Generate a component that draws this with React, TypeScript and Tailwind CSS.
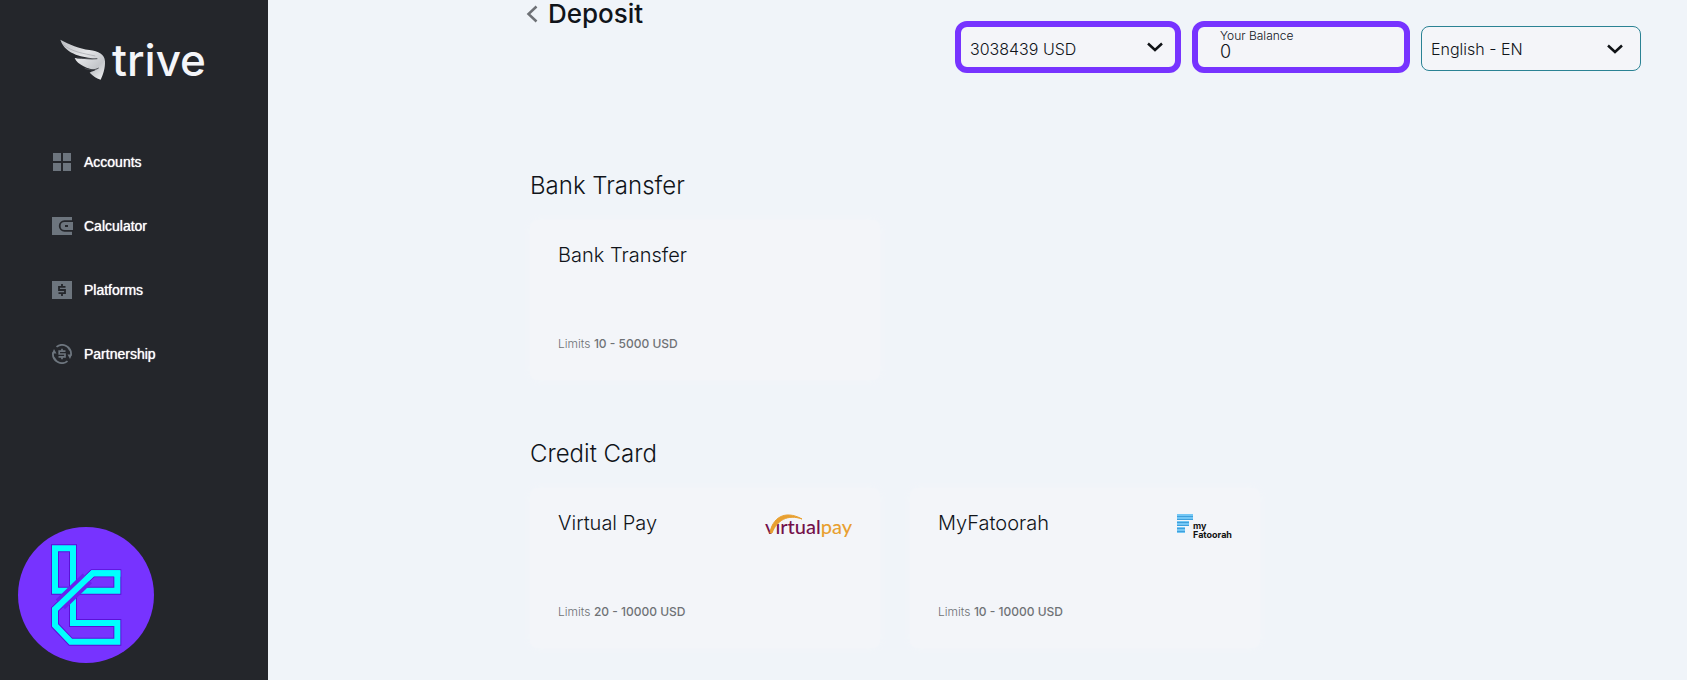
import { useState } from 'react';
import type { ReactNode } from 'react';

type Method = {
  name: string;
  limits: string;
  logo?: ReactNode;
};

function TriveLogo() {
  return (
    <a href="#home" className="flex items-center pl-[60px] text-[#f4f5f9]">
      <svg viewBox="60 55 138 126" className="h-[42px] w-[46px]" aria-hidden="true">
        <defs>
          <linearGradient id="wing" x1="0" y1="0" x2="1" y2="1">
            <stop offset="0" stopColor="#b9bbbf" />
            <stop offset="0.45" stopColor="#e4e5e8" />
            <stop offset="0.75" stopColor="#c4c6ca" />
            <stop offset="1" stopColor="#f4f5f7" />
          </linearGradient>
        </defs>
        {/* three feathers, largest at the top */}
        <path
          d="M61 57C88 72 118 84 148 88C176 92 194 100 195 122C196 142 189 163 182 177C172 174 158 166 149 156C154 152 164 150 168 147C146 147 112 132 104 112C120 112 150 116 164 114C134 108 78 106 61 57Z"
          fill="url(#wing)"
        />
        <path d="M70 72C96 94 130 98 166 106" fill="none" stroke="#a3a5aa" strokeWidth="2" />
        <path d="M110 112C130 112 150 117 172 114M134 143C150 149 164 149 176 142" fill="none" stroke="#4a4c52" strokeWidth="3" />
      </svg>
      <span className="pl-1.5 text-[44px] leading-10 font-medium">trive</span>
    </a>
  );
}

function AccountsIcon() {
  return (
    <svg viewBox="0 0 20 20" className="size-5" fill="#6d757e" aria-hidden="true">
      <path d="M1 1h8v8H1zM11 1h8v8h-8zM1 11h8v8H1zM11 11h8v8h-8z" />
    </svg>
  );
}

function CalculatorIcon() {
  return (
    <svg viewBox="0 0 21 20" className="h-5 w-[21px]" aria-hidden="true">
      <path d="M0 1h20v18H0z" fill="#6d757e" />
      <path d="M21 5H12.500a5 5 0 0 0 0 10H21z" fill="#6d757e" />
      <path d="M21 5.200H12.500a4.800 4.800 0 0 0 0 9.600H21" fill="none" stroke="#24262b" strokeWidth="1.800" />
      <rect x="13" y="9" width="3" height="2" fill="#24262b" />
    </svg>
  );
}

function PlatformsIcon() {
  return (
    <svg viewBox="0 0 20 20" className="size-5" aria-hidden="true">
      <rect y="1" width="20" height="18" fill="#6d757e" />
      <path d="M13.500 6.800H7V10H13V13.200H6.500M10 4V7M10 13V16" fill="none" stroke="#24262b" strokeWidth="1.800" />
    </svg>
  );
}

function PartnershipIcon() {
  return (
    <svg viewBox="0 0 20 20" className="size-5" fill="none" stroke="#6d757e" aria-hidden="true">
      <path d="M4.500 2.900A9 9 0 0 1 18.900 11.500M15.500 17.100A9 9 0 0 1 1.100 8.500" strokeWidth="1.800" />
      <path d="M20 10.500L15.500 10.500L18 15ZM0 9.500L4.500 9.500L2 5Z" fill="#6d757e" stroke="none" />
      <path d="M2.200 13.500A9 9 0 0 0 4.500 17" strokeWidth="1.500" />
      <path d="M17.800 6.500A9 9 0 0 0 15.500 3" strokeWidth="1.500" />
      <path d="M13.500 7.200H7.200V10H13V12.800H6.500M10 4.800V7.200M10 12.800V15.200" strokeWidth="1.700" />
    </svg>
  );
}

function BrandBadge() {
  return (
    <svg viewBox="54 51 408 408" className="size-[136px]" fill="none" role="img" aria-label="Brand badge">
      <circle cx="258" cy="255" r="204" fill="#7733ff" />
      <g strokeLinejoin="miter">
        <g stroke="#5a10d8" strokeWidth="24">
          <path d="M219 244V115H165V242H212" />
          <path d="M228 242H352V190H278L165 298V346L212 395H352V339H219V250" />
        </g>
        <g stroke="#00ffff" strokeWidth="18">
          <path d="M219 244V115H165V242H212" />
          <path d="M228 242H352V190H278L165 298V346L212 395H352V339H219V250" />
        </g>
        <path d="M262 205L181 283" stroke="#6a20ee" strokeWidth="40" />
        <path d="M352 200V190H278L165 298V310" stroke="#00ffff" strokeWidth="18" />
      </g>
    </svg>
  );
}

function VirtualPayLogo() {
  return (
    <svg viewBox="0 0 88 28" className="h-7 w-[88px]" role="img" aria-label="virtualpay">
      <text x="1" y="22" fontFamily="Lato, sans-serif" fontSize="20" fontWeight="500" fill="#74104a">
        virtual<tspan fill="#e8a030">pay</tspan>
      </text>
      <path d="M6 21C8 7 20 -3 38 7C24 2 13 8 8 21Z" fill="#e8a030" stroke="#e8a030" />
    </svg>
  );
}

function MyFatoorahLogo() {
  return (
    <svg viewBox="0 0 56 28" className="h-7 w-14" role="img" aria-label="my Fatoorah">
      <path d="M1 2h16v6H1zM1 9h12v5H1zM1 15h8v6H1z" fill="#74c7f5" />
      <path d="M1 4.500h16M1 7.500h16M1 10.500h12M1 13.500h12M1 16.500h8M1 19.500h8" stroke="#3fa0dc" />
      <g fontFamily="Inter, sans-serif" fontSize="9" fontWeight="700" fill="#111111">
        <text x="17" y="17">my</text>
        <text x="17" y="26">Fatoorah</text>
      </g>
    </svg>
  );
}

function Chevron() {
  return (
    <svg
      viewBox="0 0 16 10"
      className="pointer-events-none absolute top-1/2 right-[18px] h-2.5 w-4 -translate-y-1/2"
      fill="none"
      stroke="#0f1216"
      strokeWidth="2.500"
      aria-hidden="true"
    >
      <path d="M1 1.500L8 8L15 1.500" />
    </svg>
  );
}

const navItems = [
  { label: 'Accounts', icon: <AccountsIcon /> },
  { label: 'Calculator', icon: <CalculatorIcon /> },
  { label: 'Platforms', icon: <PlatformsIcon /> },
  { label: 'Partnership', icon: <PartnershipIcon /> },
];

const sections: { title: string; methods: Method[] }[] = [
  {
    title: 'Bank Transfer',
    methods: [{ name: 'Bank Transfer', limits: '10 - 5000 USD' }],
  },
  {
    title: 'Credit Card',
    methods: [
      { name: 'Virtual Pay', limits: '20 - 10000 USD', logo: <VirtualPayLogo /> },
      { name: 'MyFatoorah', limits: '10 - 10000 USD', logo: <MyFatoorahLogo /> },
    ],
  },
];

function Sidebar() {
  return (
    <aside className="flex w-[268px] shrink-0 flex-col bg-[#24262b] pt-[39px]">
      <TriveLogo />
      <nav className="pt-[49px] pl-[52px] font-['Liberation_Sans',Arial,sans-serif]">
        <ul>
          {navItems.map((item) => (
            <li key={item.label}>
              <a
                href={`#${item.label.toLowerCase()}`}
                className="flex h-16 items-center text-sm text-white [text-shadow:0_0_1px_#ffffff]"
              >
                <span className="w-8">{item.icon}</span>
                {item.label}
              </a>
            </li>
          ))}
        </ul>
      </nav>
      <div className="mt-auto pb-[17px] pl-[18px]">
        <BrandBadge />
      </div>
    </aside>
  );
}

function MethodCard({ name, limits, logo }: Method) {
  return (
    <button
      type="button"
      className="flex h-40 w-[350px] flex-col justify-between rounded-lg bg-[#f3f5f9] px-7 pt-6 pb-[26px] text-left shadow-[0_0_8px_#f3f5f9]"
    >
      <span className="flex w-full items-start justify-between">
        <span className="text-xl leading-[22px] font-light">{name}</span>
        {logo}
      </span>
      <span className="text-xs leading-5 font-light text-[#6f7276]">
        Limits <span className="font-medium">{limits}</span>
      </span>
    </button>
  );
}

export default function App() {
  const [account, setAccount] = useState('3038439 USD');
  const [language, setLanguage] = useState('English - EN');

  return (
    <div className="flex min-h-screen bg-[#f0f4f9] font-[Inter,sans-serif] text-[#10141a]">
      <Sidebar />

      <main className="min-w-0 flex-1">
        <header className="flex items-start justify-between pr-[46px] pl-[258px]">
          <div className="flex items-center gap-2.5">
            <button type="button" aria-label="Back">
              <svg viewBox="0 0 12 18" className="h-[18px] w-3" fill="none" stroke="#6e7176" strokeWidth="2.500">
                <path d="M10.500 1.500L2.500 9L10.500 16.500" />
              </svg>
            </button>
            <h1 className="text-[26px] leading-7 font-medium">Deposit</h1>
          </div>

          <div className="flex items-end gap-[11px] pt-[21px]">
            <div className="relative">
              <select
                aria-label="Account"
                value={account}
                onChange={(e) => setAccount(e.target.value)}
                className="h-[52px] w-[226px] appearance-none rounded-xl border-6 border-[#7733ff] bg-[#f4f5f9] px-[9px] pt-1 text-base font-light"
              >
                <option>3038439 USD</option>
              </select>
              <Chevron />
            </div>

            <div className="flex h-[52px] w-[218px] flex-col rounded-xl border-6 border-[#7733ff] bg-[#f4f5f9] px-[22px] pt-0.5">
              <label htmlFor="balance" className="text-xs leading-3.5 font-light">
                Your Balance
              </label>
              <input
                id="balance"
                readOnly
                value="0"
                className="h-4 w-full bg-transparent text-lg leading-4 font-light outline-none"
              />
            </div>

            <div className="relative mb-0.5">
              <select
                aria-label="Language"
                value={language}
                onChange={(e) => setLanguage(e.target.value)}
                className="h-[45px] w-[220px] appearance-none rounded-lg border border-[#2a8294] bg-[#f4f5f9] px-[9px] text-base font-light"
              >
                <option>English - EN</option>
              </select>
              <Chevron />
            </div>
          </div>
        </header>

        {/* Payment methods */}
        <div className="flex flex-col gap-[58px] pt-[97px] pl-[262px]">
          {sections.map((section) => (
            <section key={section.title}>
              <h2 className="pb-[18px] text-2xl leading-8 font-light">{section.title}</h2>
              <div className="flex flex-wrap gap-[30px]">
                {section.methods.map((method) => (
                  <MethodCard key={method.name} {...method} />
                ))}
              </div>
            </section>
          ))}
        </div>
      </main>
    </div>
  );
}
